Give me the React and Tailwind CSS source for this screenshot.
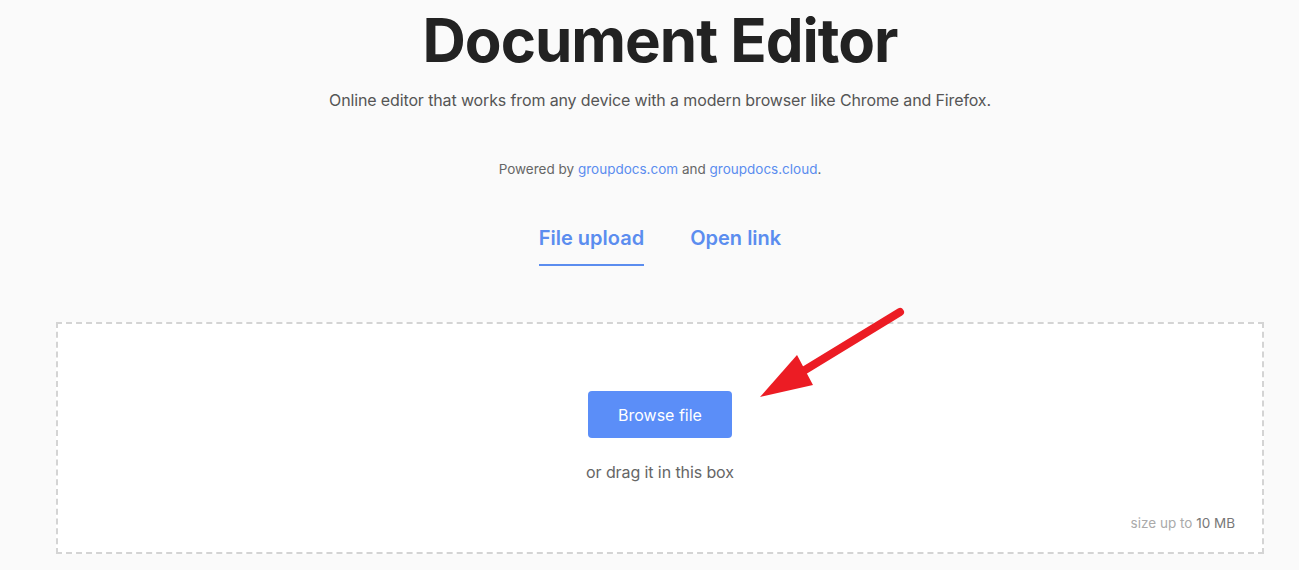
export default function App() {
  return (
    <div
      className="relative min-h-[570px] bg-[#fafafa] pl-[21px] pb-10"
      style={{ fontFamily: 'Inter, "Noto Sans", sans-serif' }}
    >
      <div className="flex flex-col items-center">
        <h1 className="mt-[8px] text-[60px] leading-[64px] font-bold text-[#222] tracking-[-1px]">
          Document Editor
        </h1>
        <p className="mt-[16px] text-[16px] leading-[24px] text-[#555] tracking-[-0.13px]">
          Online editor that works from any device with a modern browser like Chrome and Firefox.
        </p>
        <p className="mt-[47px] text-[13.5px] leading-[20px] text-[#666]">
          Powered by <a className="text-[#5b8def]">groupdocs.com</a> and{' '}
          <a className="text-[#5b8def]">groupdocs.cloud</a>.
        </p>
        <div className="mt-[45px] flex gap-[46px] text-[20px] leading-[28px] font-semibold text-[#5b8def]">
          <div className="pb-[12px] border-b-2 border-[#5b8def]">File upload</div>
          <div className="pb-[12px] border-b-2 border-transparent">Open link</div>
        </div>
        <div className="mt-[56px] w-[1208px] h-[232px] bg-white border-2 border-dashed border-[#d4d4d4] flex flex-col items-center pt-[67px]">
          <button className="w-[144px] h-[47px] rounded-[4px] bg-[#5b8ef8] text-white text-[16px]">
            Browse file
          </button>
          <p className="mt-[22px] text-[16px] leading-[24px] text-[#666] tracking-[-0.1px]">or drag it in this box</p>
          <div className="mt-auto mb-[19px] self-end mr-[27px] text-[13.5px] leading-[20px] text-[#aaa]">
            size up to <span className="text-[#777]">10 MB</span>
          </div>
        </div>
      </div>
      <svg className="absolute left-0 top-0 pointer-events-none" width="1299" height="570">
        <line x1="900" y1="312" x2="800" y2="373" stroke="#ec1c24" strokeWidth="8" strokeLinecap="round" />
        <polygon points="760,397 797,355 813,385" fill="#ec1c24" />
      </svg>
    </div>
  );
}
